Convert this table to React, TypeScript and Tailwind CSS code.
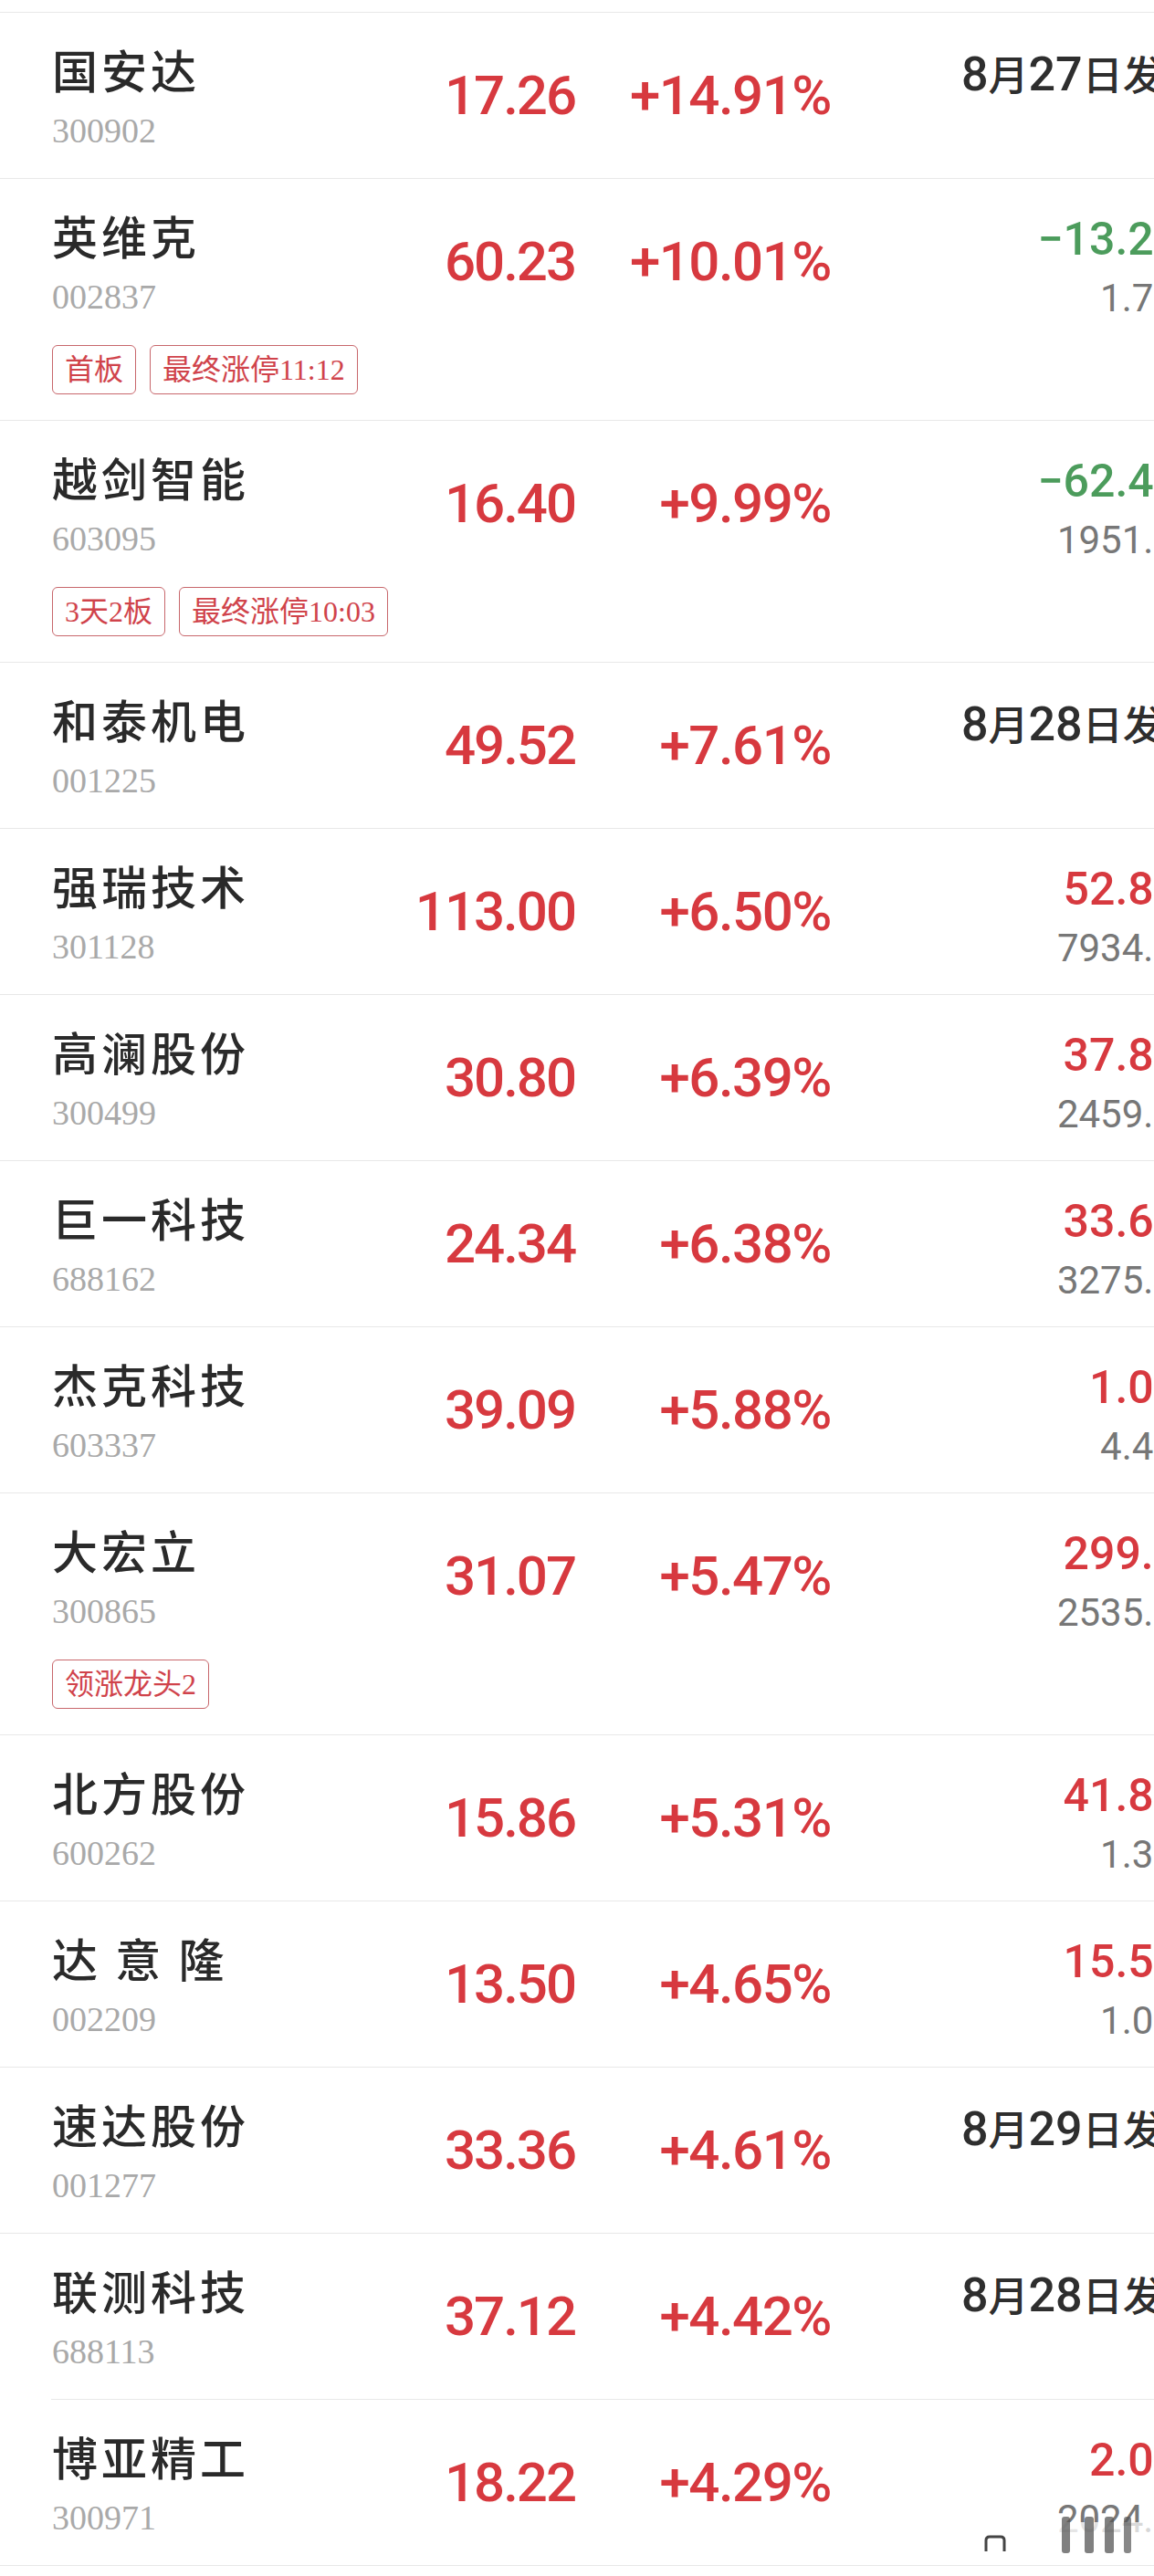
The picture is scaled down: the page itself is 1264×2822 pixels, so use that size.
// Stock gainers list — name/code, price, change, flow column (clipped at the right edge).

import clsx from 'clsx';

type Row = {
  name: string;
  code: string;
  price: string;
  pct: string;
  date?: [string, string];
  val?: string;
  down?: boolean;
  amt?: string;
  tags?: string[];
  inset?: boolean;
  smear?: boolean;
};

const rows: Row[] = [
  { name: '国安达', code: '300902', price: '17.26', pct: '+14.91%', date: ['8', '27'] },
  { name: '英维克', code: '002837', price: '60.23', pct: '+10.01%', val: '−13.25%', down: true, amt: '1.72亿', tags: ['首板', '最终涨停11:12'] },
  { name: '越剑智能', code: '603095', price: '16.40', pct: '+9.99%', val: '−62.41%', down: true, amt: '1951.3万', tags: ['3天2板', '最终涨停10:03'] },
  { name: '和泰机电', code: '001225', price: '49.52', pct: '+7.61%', date: ['8', '28'] },
  { name: '强瑞技术', code: '301128', price: '113.00', pct: '+6.50%', val: '52.84%', amt: '7934.6万' },
  { name: '高澜股份', code: '300499', price: '30.80', pct: '+6.39%', val: '37.82%', amt: '2459.1万' },
  { name: '巨一科技', code: '688162', price: '24.34', pct: '+6.38%', val: '33.67%', amt: '3275.4万' },
  { name: '杰克科技', code: '603337', price: '39.09', pct: '+5.88%', val: '1.06%', amt: '4.47亿' },
  { name: '大宏立', code: '300865', price: '31.07', pct: '+5.47%', val: '299.6%', amt: '2535.8万', tags: ['领涨龙头2'] },
  { name: '北方股份', code: '600262', price: '15.86', pct: '+5.31%', val: '41.83%', amt: '1.35亿' },
  { name: '达 意 隆', code: '002209', price: '13.50', pct: '+4.65%', val: '15.52%', amt: '1.08亿' },
  { name: '速达股份', code: '001277', price: '33.36', pct: '+4.61%', date: ['8', '29'] },
  { name: '联测科技', code: '688113', price: '37.12', pct: '+4.42%', date: ['8', '28'], inset: true },
  { name: '博亚精工', code: '300971', price: '18.22', pct: '+4.29%', val: '2.07%', amt: '2024.5万', smear: true },
];

const NUM = "font-['Roboto','Noto_Sans_CJK_SC',sans-serif]";
const CJK = "font-['Noto_Sans_CJK_SC',sans-serif]";

function RightCell({ r }: { r: Row }) {
  if (r.date) {
    return (
      <div className={clsx('relative ml-[143px] mr-[-65px] h-[120px] w-[276px] shrink-0 self-start whitespace-nowrap font-medium text-[#2e2e2e]', NUM)}>
        <div className="mt-[9px] text-[52px] leading-[56px]">
          {r.date[0]}
          <span className={clsx('text-[44px] leading-none', CJK)}>月</span>
          {r.date[1]}
          <span className={clsx('text-[44px] leading-none', CJK)}>日发布公告</span>
        </div>
      </div>
    );
  }
  return (
    <div className={clsx('relative ml-[143px] mr-[-65px] flex h-[120px] w-[276px] shrink-0 flex-col items-end self-start whitespace-nowrap', NUM)}>
      <div className={clsx('mt-[7px] text-[50px] font-medium leading-[56px]', r.down ? 'text-[#4c9c5c]' : 'text-[#d7393f]')}>
        {r.val}
      </div>
      <div className="mt-[13px] text-[42px] leading-[48px] text-[#777]">{r.amt}</div>
      {r.smear && (
        <svg className="pointer-events-none absolute left-[-53px] top-[83px]" width="264" height="54" viewBox="0 0 264 54">
          <defs>
            <linearGradient id="fade" x1="0" x2="1" y1="0" y2="0">
              <stop offset="0" stopColor="#fff" stopOpacity="0" />
              <stop offset="0.25" stopColor="#fff" stopOpacity="0.95" />
              <stop offset="1" stopColor="#fff" stopOpacity="0.7" />
            </linearGradient>
          </defs>
          <rect x="0" y="20" width="264" height="34" fill="url(#fade)" />
          <path d="M80 52 V40 Q80 36 84 36 H96 Q100 36 100 40 V52" fill="none" stroke="#444" strokeWidth="3" />
          <rect x="163" y="14" width="9" height="40" rx="3" fill="#555" opacity="0.75" />
          <rect x="188" y="14" width="10" height="40" rx="3" fill="#555" opacity="0.75" />
          <rect x="210" y="14" width="10" height="40" rx="3" fill="#555" opacity="0.75" />
          <rect x="231" y="14" width="8" height="40" rx="3" fill="#555" opacity="0.7" />
        </svg>
      )}
    </div>
  );
}

function StockRow({ r }: { r: Row }) {
  return (
    <>
      <div
        className={clsx(
          'pl-[57px] pt-[31px]',
          r.tags ? 'pb-[28px]' : 'pb-[30px]',
          !r.inset && 'border-b border-[#e8e8e8]',
        )}
      >
        <div className="flex items-center">
          <div className="min-w-0 flex-1">
            <div className={clsx('text-[50px] font-medium leading-[60px] tracking-[4px] text-[#2a2a2a]', CJK)}>
              {r.name}
            </div>
            <div className="mt-[16px] font-['Liberation_Serif',serif] text-[38px] leading-[44px] text-[#a9a9a9]">
              {r.code}
            </div>
          </div>
          <div className={clsx('w-[210px] shrink-0 text-right text-[60px] font-medium leading-[64px] tracking-[-2px] text-[#d7393f]', NUM)}>
            {r.price}
          </div>
          <div className={clsx('w-[280px] shrink-0 text-right text-[60px] font-medium leading-[64px] tracking-[-1.5px] text-[#d7393f]', NUM)}>
            {r.pct}
          </div>
          <RightCell r={r} />
        </div>
        {r.tags && (
          <div className="mt-[31px] flex gap-[15px]">
            {r.tags.map(t => (
              <span
                key={t}
                className="rounded-[6px] border border-[#c8676c] px-[13px] py-[6px] font-['Liberation_Serif','Noto_Sans_CJK_SC',serif] text-[32px] leading-[40px] text-[#d0434b]"
              >
                {t}
              </span>
            ))}
          </div>
        )}
      </div>
      {r.inset && <div className="ml-[56px] h-px bg-[#e8e8e8]" />}
    </>
  );
}

export default function App() {
  return (
    <div className="min-h-[2822px] w-full overflow-hidden bg-white">
      <div className="h-[14px] border-b border-[#e8e8e8]" />
      {rows.map(r => (
        <StockRow key={r.code} r={r} />
      ))}
    </div>
  );
}
